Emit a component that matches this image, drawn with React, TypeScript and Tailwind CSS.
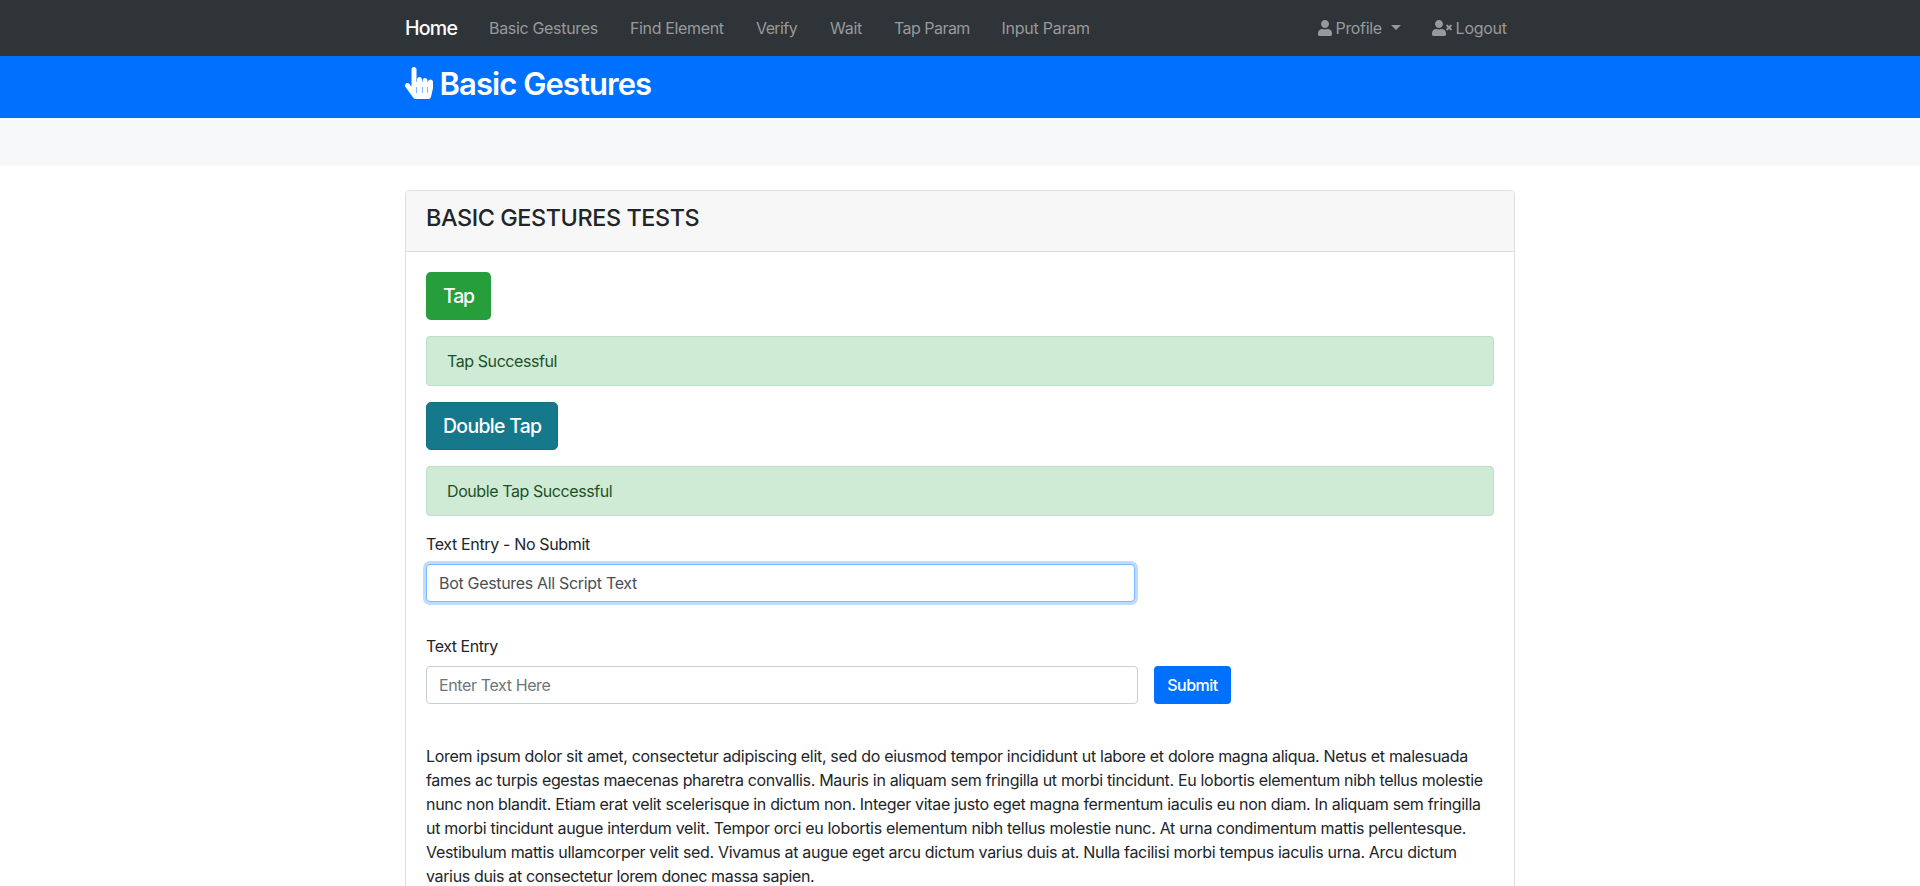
import { FaHandPointer, FaUser, FaUserTimes } from "react-icons/fa";

const links = [
  { label: "Basic Gestures", cls: "w-[141px] tracking-[-0.32px]" },
  { label: "Find Element", cls: "w-[126px] tracking-[-0.36px]" },
  { label: "Verify", cls: "w-[74px] tracking-[-0.6px]" },
  { label: "Wait", cls: "w-[64px] tracking-[-0.27px]" },
  { label: "Tap Param", cls: "w-[107.5px] tracking-[-0.54px]" },
  { label: "Input Param", cls: "w-[120px] tracking-[-0.25px]" },
];

const paragraph = [
  {
    text: "Lorem ipsum dolor sit amet, consectetur adipiscing elit, sed do eiusmod tempor incididunt ut labore et dolore magna aliqua. Netus et malesuada",
    cls: "tracking-[-0.312px]",
  },
  {
    text: "fames ac turpis egestas maecenas pharetra convallis. Mauris in aliquam sem fringilla ut morbi tincidunt. Eu lobortis elementum nibh tellus molestie",
    cls: "tracking-[-0.329px]",
  },
  {
    text: "nunc non blandit. Etiam erat velit scelerisque in dictum non. Integer vitae justo eget magna fermentum iaculis eu non diam. In aliquam sem fringilla",
    cls: "tracking-[-0.328px]",
  },
  {
    text: "ut morbi tincidunt augue interdum velit. Tempor orci eu lobortis elementum nibh tellus molestie nunc. At urna condimentum mattis pellentesque.",
    cls: "tracking-[-0.306px]",
  },
  {
    text: "Vestibulum mattis ullamcorper velit sed. Vivamus at augue eget arcu dictum varius duis at. Nulla facilisi morbi tempus iaculis urna. Arcu dictum",
    cls: "tracking-[-0.322px]",
  },
  { text: "varius duis at consectetur lorem donec massa sapien.", cls: "tracking-[-0.353px]" },
];

function Navbar() {
  return (
    <nav className="h-14 bg-[#2f3438]">
      <div className="mx-auto flex h-14 w-[1110px] items-center text-[#979a9c]">
        <a className="w-[68px] text-[19.6px] font-medium tracking-[-0.8px] text-white">Home</a>
        {links.map((l) => (
          <a key={l.label} className={`shrink-0 whitespace-nowrap pl-4 ${l.cls}`}>
            {l.label}
          </a>
        ))}
        <div className="ml-auto flex items-center">
          <a className="flex w-[114px] items-center">
            <FaUser className="h-4 w-3.5" />
            <span className="ml-[3.6px] tracking-[-0.35px]">Profile</span>
            <span className="ml-[9.6px] mb-[1px] border-x-[5px] border-t-[5px] border-x-transparent border-t-[#979a9c]" />
          </a>
          <a className="flex w-[83px] items-center">
            <FaUserTimes className="h-4 w-5" />
            <span className="ml-[3.6px] tracking-[-0.26px]">Logout</span>
          </a>
        </div>
      </div>
    </nav>
  );
}

function Alert({ children }: { children: string }) {
  return (
    <div className="mt-4 mb-4 flex h-[50px] items-center rounded border border-[#bae2c4] bg-[#cfead5] px-5 tracking-[-0.42px] text-[#1b5228]">
      {children}
    </div>
  );
}

export default function App() {
  return (
    <div className="h-[886px] overflow-hidden bg-white font-['Inter','Liberation_Sans',sans-serif] text-base leading-6 text-[#212529]">
      <Navbar />
      <header className="h-[62px] bg-[#0070ff]">
        <div className="mx-auto flex w-[1110px] pt-2 text-white">
          <FaHandPointer className="mt-[3px] h-8 w-7" />
          <h2 className="ml-[6.5px] text-[31px] leading-[39px] font-semibold tracking-[-0.93px]">Basic Gestures</h2>
        </div>
      </header>
      <div className="h-12 bg-[#f7f8fa]" />
      <main className="mx-auto mt-6 h-[720px] w-[1110px] rounded border border-[#dfdfdf]">
        <div className="h-[61px] rounded-t-[3px] border-b border-[#dadada] bg-[#f7f7f7] px-5 pt-3">
          <h4 className="text-[23.4px] leading-[29px] font-medium tracking-[-0.41px]">BASIC GESTURES TESTS</h4>
        </div>
        <div className="px-5 pt-5">
          <button className="block h-12 w-[65px] rounded-[4.8px] bg-[#269e3c] pl-[17px] text-left text-[19.4px] font-medium tracking-[-1.1px] text-white">
            Tap
          </button>
          <Alert>Tap Successful</Alert>
          <button className="block h-12 w-[132px] rounded-[4.8px] border border-[#136f80] bg-[#16788b] pl-4 text-left text-[19.4px] font-medium tracking-[-0.66px] whitespace-nowrap text-white">
            Double Tap
          </button>
          <Alert>Double Tap Successful</Alert>
          <label className="block tracking-[-0.35px]">Text Entry - No Submit</label>
          <input
            className="mt-2 block h-[38px] w-[709px] rounded border border-[#7bb8ff] bg-white px-3 tracking-[-0.32px] text-[#495057] shadow-[0_0_0_3px_#bfdbff] outline-none"
            defaultValue="Bot Gestures All Script Text"
          />
          <label className="mt-8 block tracking-[-0.45px]">Text Entry</label>
          <div className="mt-2 flex gap-4">
            <input
              className="h-[38px] w-[712px] rounded border border-[#c9ced6] bg-white px-3 tracking-[-0.38px] outline-none placeholder:text-[#6c757d]"
              placeholder="Enter Text Here"
            />
            <button className="h-[38px] w-[77px] rounded bg-[#0070ff] font-medium tracking-[-0.5px] text-white">Submit</button>
          </div>
          <p className="mt-10">
            {paragraph.map((l) => (
              <span key={l.text} className={`block whitespace-nowrap ${l.cls}`}>
                {l.text}
              </span>
            ))}
          </p>
        </div>
      </main>
    </div>
  );
}
